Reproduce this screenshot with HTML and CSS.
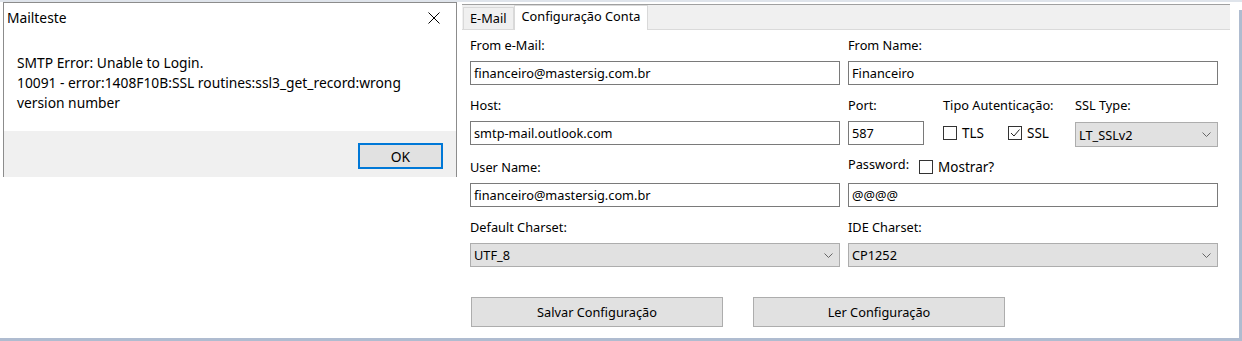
FILE: index.html
```html
<!DOCTYPE html>
<html lang="pt-BR">
<head>
  <meta charset="UTF-8">
  <title>Mailteste</title>
  <link rel="stylesheet" href="styles.css">
</head>
<body>
  <div class="screen">
    <div class="dialog">
      <div class="dialog-title">
        <span>Mailteste</span>
        <svg class="close" width="12" height="12" viewBox="0 0 12 12"><path d="M0.5 0.5 L11.5 11.5 M11.5 0.5 L0.5 11.5" stroke="#000" stroke-width="1" fill="none"/></svg>
      </div>
      <div class="dialog-body">
        <p>SMTP Error: Unable to Login.<br>10091 - error:1408F10B:SSL routines:ssl3_get_record:wrong<br>version number</p>
      </div>
      <div class="dialog-footer">
        <button class="btn-ok">OK</button>
      </div>
    </div>

    <div class="config">
      <div class="tabs">
        <span class="tab">E-Mail</span>
        <span class="tab active">Configuração Conta</span>
      </div>
      <div class="form">
        <div class="field">
          <label>From e-Mail:</label>
          <div class="edit">financeiro@mastersig.com.br</div>
        </div>
        <div class="field">
          <label>From Name:</label>
          <div class="edit">Financeiro</div>
        </div>

        <div class="field">
          <label>Host:</label>
          <div class="edit">smtp-mail.outlook.com</div>
        </div>
        <div class="subgrid">
          <div class="field">
            <label>Port:</label>
            <div class="edit port">587</div>
          </div>
          <div class="field">
            <label>Tipo Autenticação:</label>
            <div class="checks">
              <span class="check"><span class="box"></span>TLS</span>
              <span class="check"><span class="box"><svg width="12" height="12" viewBox="0 0 12 12"><path d="M2 6 L5 9 L10.5 2.5" stroke="#222" stroke-width="1" fill="none"/></svg></span>SSL</span>
            </div>
          </div>
          <div class="field">
            <label>SSL Type:</label>
            <div class="combo ssl">LT_SSLv2<svg class="chev" width="9" height="5" viewBox="0 0 9 5"><path d="M0.5 0.5 L4.5 4.5 L8.5 0.5" stroke="#666" fill="none"/></svg></div>
          </div>
        </div>

        <div class="field">
          <label>User Name:</label>
          <div class="edit">financeiro@mastersig.com.br</div>
        </div>
        <div class="field">
          <div class="label-row">
            <label>Password:</label>
            <span class="check"><span class="box"></span>Mostrar?</span>
          </div>
          <div class="edit">@@@@</div>
        </div>

        <div class="field">
          <label>Default Charset:</label>
          <div class="combo">UTF_8<svg class="chev" width="9" height="5" viewBox="0 0 9 5"><path d="M0.5 0.5 L4.5 4.5 L8.5 0.5" stroke="#666" fill="none"/></svg></div>
        </div>
        <div class="field">
          <label>IDE Charset:</label>
          <div class="combo">CP1252<svg class="chev" width="9" height="5" viewBox="0 0 9 5"><path d="M0.5 0.5 L4.5 4.5 L8.5 0.5" stroke="#666" fill="none"/></svg></div>
        </div>
      </div>
      <div class="actions">
        <button class="btn">Salvar Configuração</button>
        <button class="btn">Ler Configuração</button>
      </div>
    </div>

    <div class="edge"></div>
  </div>
</body>
</html>
```

FILE: styles.css
```css
* {
  box-sizing: border-box;
}

body {
  margin: 0;
  font-family: 'Noto Sans', sans-serif;
  font-size: 13.8px;
  color: #000;
  background: #fff;
}

.screen {
  width: 1242px;
  height: 341px;
  display: flex;
  align-items: flex-start;
  border-top: 2px solid #dfe4eb;
  border-bottom: 3px solid #afbcd0;
}

/* message box */
.dialog {
  margin-left: 3px;
  width: 454px;
  height: 175px;
  display: flex;
  flex-direction: column;
  border: 1px solid #8c8c8c;
  border-bottom: none;
  background: #fff;
}

.dialog-title {
  height: 29px;
  display: flex;
  justify-content: space-between;
  align-items: center;
  padding: 0 16px 0 3px;
}

.dialog-body {
  flex: 1;
  padding: 21px 13px 0;
}

.dialog-body p {
  margin: 0;
  line-height: 20px;
}

.dialog-footer {
  height: 46px;
  background: #f0f0f0;
  display: flex;
  justify-content: flex-end;
  padding: 12px 13px 0 0;
}

.btn-ok {
  width: 85px;
  height: 26px;
  border: 2px solid #0078d7;
  background: #e1e1e1;
  font: inherit;
  padding: 0;
}

/* config panel */
.config {
  margin: 2px 0 0 5px;
  width: 768px;
  font-size: 12.75px;
}

.tabs {
  height: 26px;
  display: flex;
  align-items: flex-end;
  padding-left: 1px;
  background: #f0f0f0;
  border-top: 1px solid #a0a0a0;
  border-bottom: 1px solid #dadada;
}

.tab {
  height: 22px;
  padding: 0 6px;
  line-height: 20px;
  border: 1px solid #d9d9d9;
  border-bottom: none;
}

.tab.active {
  height: 25px;
  margin-bottom: -1px;
  padding: 0 7px;
  line-height: 21px;
  background: #fff;
}

.form {
  display: grid;
  grid-template-columns: 370px 370px;
  column-gap: 8px;
  row-gap: 11px;
  padding: 6px 0 0 8px;
}

.field {
  display: flex;
  flex-direction: column;
}

.field label,
.label-row {
  height: 18px;
  line-height: 18px;
  margin-bottom: 7px;
}

.label-row {
  display: flex;
  align-items: center;
  gap: 10px;
}

.edit,
.combo {
  height: 24px;
  line-height: 22px;
  padding-left: 3px;
  border: 1px solid #7a7a7a;
  background: #fff;
}

.edit.port {
  width: 76px;
}

.combo {
  display: flex;
  justify-content: space-between;
  align-items: center;
  padding-right: 6px;
  border-color: #adadad;
  background: #e1e1e1;
}

.combo.ssl {
  height: 25px;
  margin-top: 1px;
}

.subgrid {
  display: grid;
  grid-template-columns: 95px 132px 143px;
}

.checks {
  height: 24px;
  display: flex;
  align-items: center;
  gap: 24px;
}

.check {
  display: flex;
  align-items: center;
  gap: 5px;
  font-size: 13.5px;
}

.box {
  width: 14px;
  height: 14px;
  border: 1px solid #333;
  background: #fff;
  display: flex;
  align-items: center;
  justify-content: center;
}

.actions {
  display: flex;
  gap: 30px;
  padding: 30px 0 0 9px;
}

.btn {
  width: 252px;
  height: 30px;
  border: 1px solid #adadad;
  background: #e1e1e1;
  font: inherit;
  padding: 0;
}

.edge {
  margin: 8px 0 0 9px;
  width: 3px;
  height: 328px;
  background: #afbcd0;
}
```
